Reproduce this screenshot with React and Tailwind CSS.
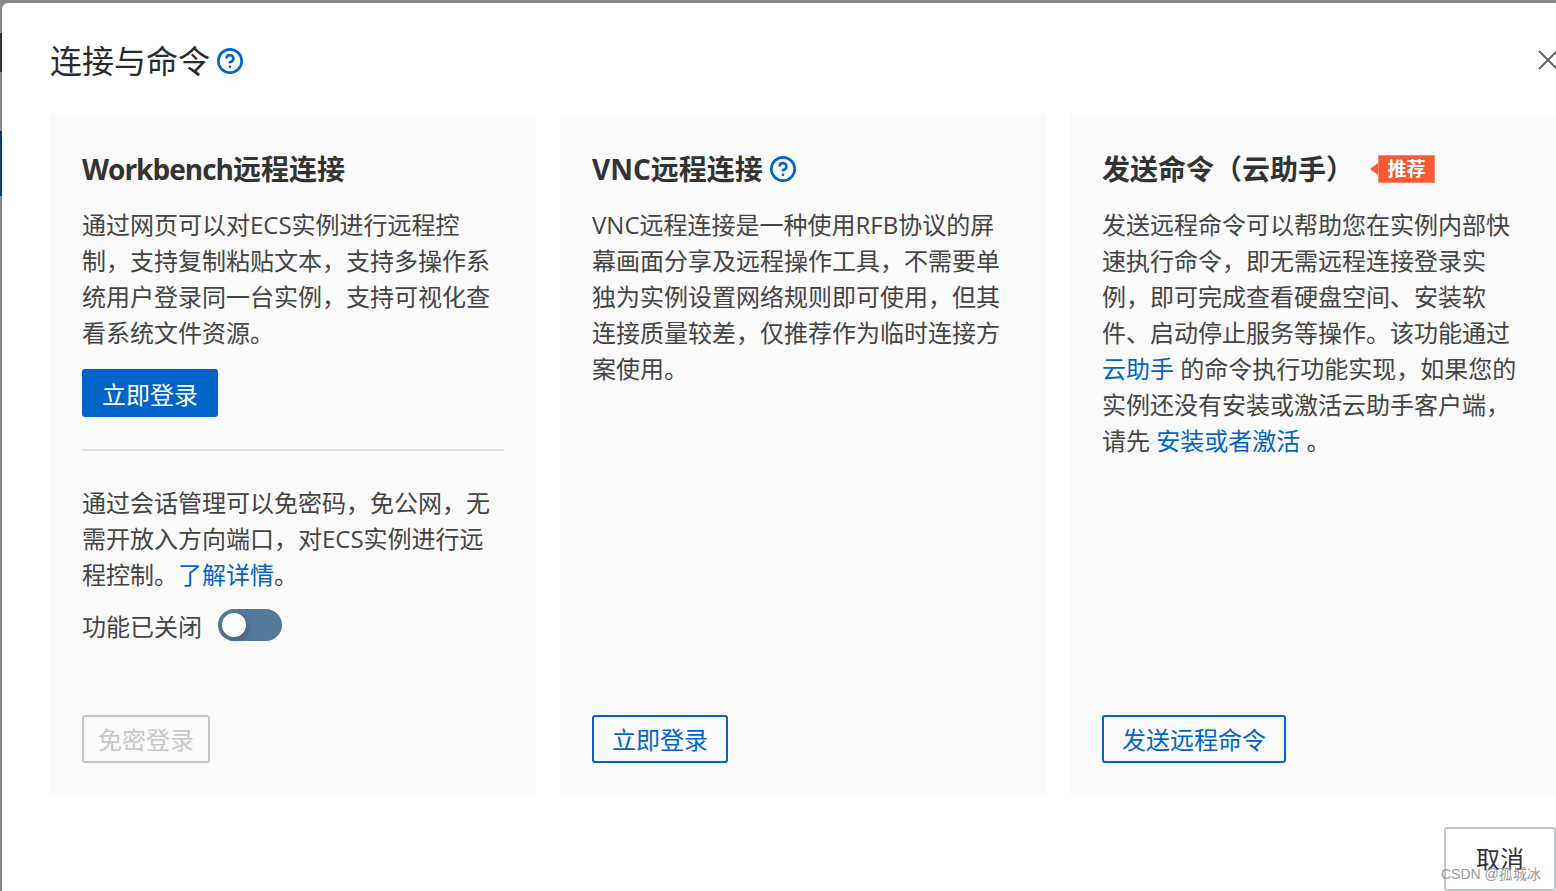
import { CircleHelp } from "lucide-react";

const font = { fontFamily: '"Open Sans", "Noto Sans CJK SC", sans-serif' };

function Help({ className }) {
  return <CircleHelp size={28} strokeWidth={2.25} className={"text-[#0064c8] " + className} />;
}

function Lines({ lines }) {
  return (
    <p className="text-[24px] leading-[36px] whitespace-nowrap text-[#444]">
      {lines.map((line, i) => (
        <span key={i} className="block">
          {line}
        </span>
      ))}
    </p>
  );
}

function Link({ children }) {
  return <span className="text-[#0064c8]">{children}</span>;
}

function OutlineButton({ children }) {
  return (
    <button className="h-12 w-fit rounded-[3px] border-2 border-[#0064c8] px-[18px] pt-[2px] text-[24px] leading-none text-[#0064c8]">
      {children}
    </button>
  );
}

function Card({ title, children }) {
  return (
    <div className="flex h-[680px] w-[486px] shrink-0 flex-col bg-[#fafafa] p-8">
      <div className="flex h-11 items-center text-[28px] font-bold text-[#333]">{title}</div>
      <div className="mt-4 flex grow flex-col">{children}</div>
    </div>
  );
}

export default function App() {
  return (
    <div className="relative flex h-[891px] w-[1556px] overflow-hidden bg-[#888]" style={font}>
      {/* page behind the dialog, only a sliver shows */}
      <div className="flex w-[2px] shrink-0 flex-col pt-[33px]">
        <div className="h-[39px] bg-[#333]" />
        <div className="mt-[59px] h-[65px] bg-[#00407f]" />
      </div>

      <div className="mt-[3px] flex h-[900px] w-[1554px] shrink-0 flex-col rounded-tl-[6px] bg-white pl-12">
        <div className="flex h-[112px] items-center pt-[4px]">
          <h1 className="text-[32px] leading-[44px] font-normal text-[#2a2a2a]">连接与命令</h1>
          <Help className="ml-[6px]" />
          <svg
            width="20"
            height="20"
            viewBox="0 0 20 20"
            className="mr-[-2px] mb-[2px] ml-auto shrink-0 text-[#666]"
            fill="none"
            stroke="currentColor"
            strokeWidth="2"
          >
            <path d="M1 1 L19 19 M19 1 L1 19" />
          </svg>
        </div>

        <div className="flex gap-6">
          <Card
            title={
              <>
                <span className="tracking-[-1px]">Workbench</span>远程连接
              </>
            }
          >
            <Lines
              lines={[
                "通过网页可以对ECS实例进行远程控",
                "制，支持复制粘贴文本，支持多操作系",
                "统用户登录同一台实例，支持可视化查",
                "看系统文件资源。",
              ]}
            />
            <button className="mt-[18px] h-12 w-fit rounded-[3px] bg-[#0064c8] px-5 pt-[3px] text-[24px] leading-none text-white">
              立即登录
            </button>
            <div className="mt-8 h-[2px] bg-[#e3e3e3]" />
            <div className="mt-[34px]">
              <Lines
                lines={[
                  "通过会话管理可以免密码，免公网，无",
                  "需开放入方向端口，对ECS实例进行远",
                  <>
                    程控制。<Link>了解详情</Link>。
                  </>,
                ]}
              />
            </div>
            <div className="mt-3 flex items-center gap-4">
              <span className="mt-1 text-[24px] leading-[36px] text-[#444]">功能已关闭</span>
              <div className="flex h-8 w-16 items-center rounded-full bg-[#54789a] pl-1">
                <div className="h-6 w-6 rounded-full bg-white shadow-[2px_3px_6px_rgba(0,0,0,0.2)]" />
              </div>
            </div>
            <button className="mt-auto h-12 w-fit rounded-[3px] border-2 border-[#c0c6cc] px-[14px] pt-[2px] text-[24px] leading-none text-[#c8c8c8]">
              免密登录
            </button>
          </Card>

          <Card
            title={
              <>
                VNC远程连接
                <Help className="ml-[6px]" />
              </>
            }
          >
            <Lines
              lines={[
                "VNC远程连接是一种使用RFB协议的屏",
                "幕画面分享及远程操作工具，不需要单",
                "独为实例设置网络规则即可使用，但其",
                "连接质量较差，仅推荐作为临时连接方",
                "案使用。",
              ]}
            />
            <div className="mt-auto">
              <OutlineButton>立即登录</OutlineButton>
            </div>
          </Card>

          <Card
            title={
              <>
                发送命令（云助手）
                <div className="ml-4 flex items-center">
                  <svg width="8" height="12" viewBox="0 0 8 12" className="shrink-0">
                    <path d="M8 0 L0 6 L8 12 Z" fill="#f55a35" />
                  </svg>
                  <span className="flex h-[28px] w-[57px] items-center justify-center border border-[#fb8a6e] bg-[#f55a35] text-[19px] leading-none font-bold text-white">
                    推荐
                  </span>
                </div>
              </>
            }
          >
            <Lines
              lines={[
                "发送远程命令可以帮助您在实例内部快",
                "速执行命令，即无需远程连接登录实",
                "例，即可完成查看硬盘空间、安装软",
                "件、启动停止服务等操作。该功能通过",
                <>
                  <Link>云助手</Link> 的命令执行功能实现，如果您的
                </>,
                "实例还没有安装或激活云助手客户端，",
                <>
                  请先 <Link>安装或者激活</Link> 。
                </>,
              ]}
            />
            <div className="mt-auto">
              <OutlineButton>发送远程命令</OutlineButton>
            </div>
          </Card>
        </div>

        <div className="mt-8 flex justify-end">
          <button className="h-16 w-[112px] rounded-[3px] border-2 border-[#c0c6cc] text-[24px] leading-none text-[#333]">
            取消
          </button>
        </div>
      </div>

      {/* CSDN watermark sits on top of the cancel button */}
      <span className="pointer-events-none absolute top-[865px] left-[1441px] font-['Liberation_Sans','Noto_Sans_CJK_SC',sans-serif] text-[14px] leading-[18px] whitespace-nowrap text-[#999]">
        CSDN @孤城冰
      </span>
    </div>
  );
}
